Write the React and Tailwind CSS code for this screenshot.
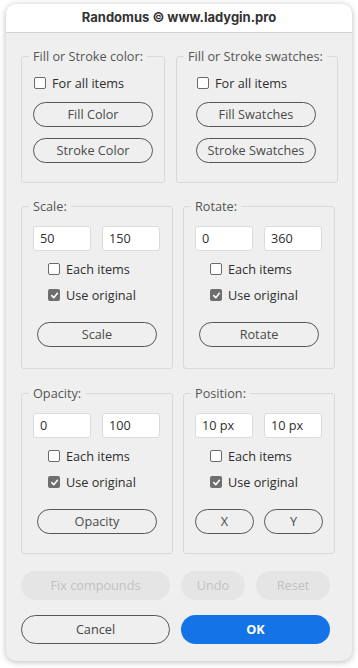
import React from "react";

const F = { fontFamily: '"Open Sans", "Noto Sans", sans-serif' };

function Check({ checked, label }) {
  return (
    <div className="flex items-center h-[16px]">
      {checked ? (
        <span className="w-[12px] h-[12px] rounded-[2px] bg-[#6e6e6e] flex items-center justify-center">
          <svg width="9" height="9" viewBox="0 0 10 10">
            <path d="M2 5.2 L4.2 7.4 L8.2 2.6" fill="none" stroke="white" strokeWidth="1.8" strokeLinecap="round" strokeLinejoin="round" />
          </svg>
        </span>
      ) : (
        <span className="w-[12px] h-[12px] rounded-[2px] border border-[#6a6a6a] bg-white" />
      )}
      <span className="ml-[6px] text-[12.7px] text-[#2e2e2e] leading-[16px]">{label}</span>
    </div>
  );
}

function Btn({ children, className = "" }) {
  return (
    <div className={"flex items-center justify-center rounded-full border border-[#555] text-[12.7px] text-[#4a4a4a] " + className}>
      {children}
    </div>
  );
}

function Input({ value }) {
  return (
    <div className="w-[58px] h-[25px] bg-white border border-[#dcdcdc] rounded-[3px] flex items-center pl-[6px] text-[12.7px] text-[#2e2e2e]">
      {value}
    </div>
  );
}

function Panel({ title, className = "", children }) {
  return (
    <fieldset className={"border border-[#d9d9d9] rounded-[3px] " + className}>
      <legend className="ml-[7px] px-[4px] text-[12.7px] leading-[16px] text-[#555]">{title}</legend>
      {children}
    </fieldset>
  );
}

function NumPanel({ title, a, b, btn, className, h }) {
  return (
    <Panel title={title} className={className + " " + h}>
      <div className="flex gap-[11px] pl-[11px] mt-[12px]">
        <Input value={a} />
        <Input value={b} />
      </div>
      <div className="pl-[26px] mt-[10px]">
        <Check label="Each items" />
      </div>
      <div className="pl-[26px] mt-[10px]">
        <Check checked label="Use original" />
      </div>
      {btn}
    </Panel>
  );
}

export default function App() {
  return (
    <div className="min-h-screen bg-white pt-[4px] pl-[6px]" style={F}>
      <div className="w-[346px] h-[657px] rounded-[10px] bg-[#efefef] shadow-[0_1px_6px_rgba(0,0,0,0.28)] overflow-hidden flex flex-col">
        <div className="h-[29px] bg-white border-b border-[#d2d2d2] flex items-center justify-center text-[13px] font-bold text-[#333]" style={{ fontFamily: 'Inter, "Noto Sans", sans-serif' }}>
          Randomus © www.ladygin.pro
        </div>
        <div className="pl-[15px] pt-[15px] flex flex-col">
          <div className="flex gap-[11px]">
            <Panel title="Fill or Stroke color:" className="w-[144px] h-[135px]">
              <div className="pl-[12px] mt-[11px]">
                <Check label="For all items" />
              </div>
              <div className="pl-[11px] mt-[11px] flex flex-col gap-[11px]">
                <Btn className="w-[120px] h-[25px]">Fill Color</Btn>
                <Btn className="w-[120px] h-[25px]">Stroke Color</Btn>
              </div>
            </Panel>
            <Panel title="Fill or Stroke swatches:" className="w-[162px] h-[135px]">
              <div className="pl-[20px] mt-[11px]">
                <Check label="For all items" />
              </div>
              <div className="pl-[19px] mt-[11px] flex flex-col gap-[11px]">
                <Btn className="w-[120px] h-[25px]">Fill Swatches</Btn>
                <Btn className="w-[120px] h-[25px]">Stroke Swatches</Btn>
              </div>
            </Panel>
          </div>
          <div className="flex gap-[10px] mt-[15px]">
            <NumPanel title="Scale:" a="50" b="150" className="w-[152px]" h="h-[171px]"
              btn={<div className="pl-[15px] mt-[19px]"><Btn className="w-[120px] h-[25px]">Scale</Btn></div>} />
            <NumPanel title="Rotate:" a="0" b="360" className="w-[152px]" h="h-[171px]"
              btn={<div className="pl-[15px] mt-[19px]"><Btn className="w-[120px] h-[25px]">Rotate</Btn></div>} />
          </div>
          <div className="flex gap-[10px] mt-[16px]">
            <NumPanel title="Opacity:" a="0" b="100" className="w-[152px]" h="h-[169px]"
              btn={<div className="pl-[15px] mt-[19px]"><Btn className="w-[120px] h-[25px]">Opacity</Btn></div>} />
            <NumPanel title="Position:" a="10 px" b="10 px" className="w-[152px]" h="h-[169px]"
              btn={<div className="pl-[11px] mt-[19px] flex gap-[10px]"><Btn className="w-[59px] h-[25px]">X</Btn><Btn className="w-[59px] h-[25px]">Y</Btn></div>} />
          </div>
          <div className="flex gap-[11px] mt-[17px] text-[12.7px] text-[#c2c2c2]">
            <div className="w-[149px] h-[29px] rounded-full bg-[#e5e5e5] flex items-center justify-center">Fix compounds</div>
            <div className="w-[64px] h-[29px] rounded-full bg-[#e5e5e5] flex items-center justify-center">Undo</div>
            <div className="w-[74px] h-[29px] rounded-full bg-[#e5e5e5] flex items-center justify-center">Reset</div>
          </div>
          <div className="flex gap-[11px] mt-[15px] text-[12.7px]">
            <div className="w-[149px] h-[29px] rounded-full border border-[#555] text-[#444] flex items-center justify-center">Cancel</div>
            <div className="w-[149px] h-[29px] rounded-full bg-[#1473e6] text-white font-bold flex items-center justify-center">OK</div>
          </div>
        </div>
      </div>
    </div>
  );
}
